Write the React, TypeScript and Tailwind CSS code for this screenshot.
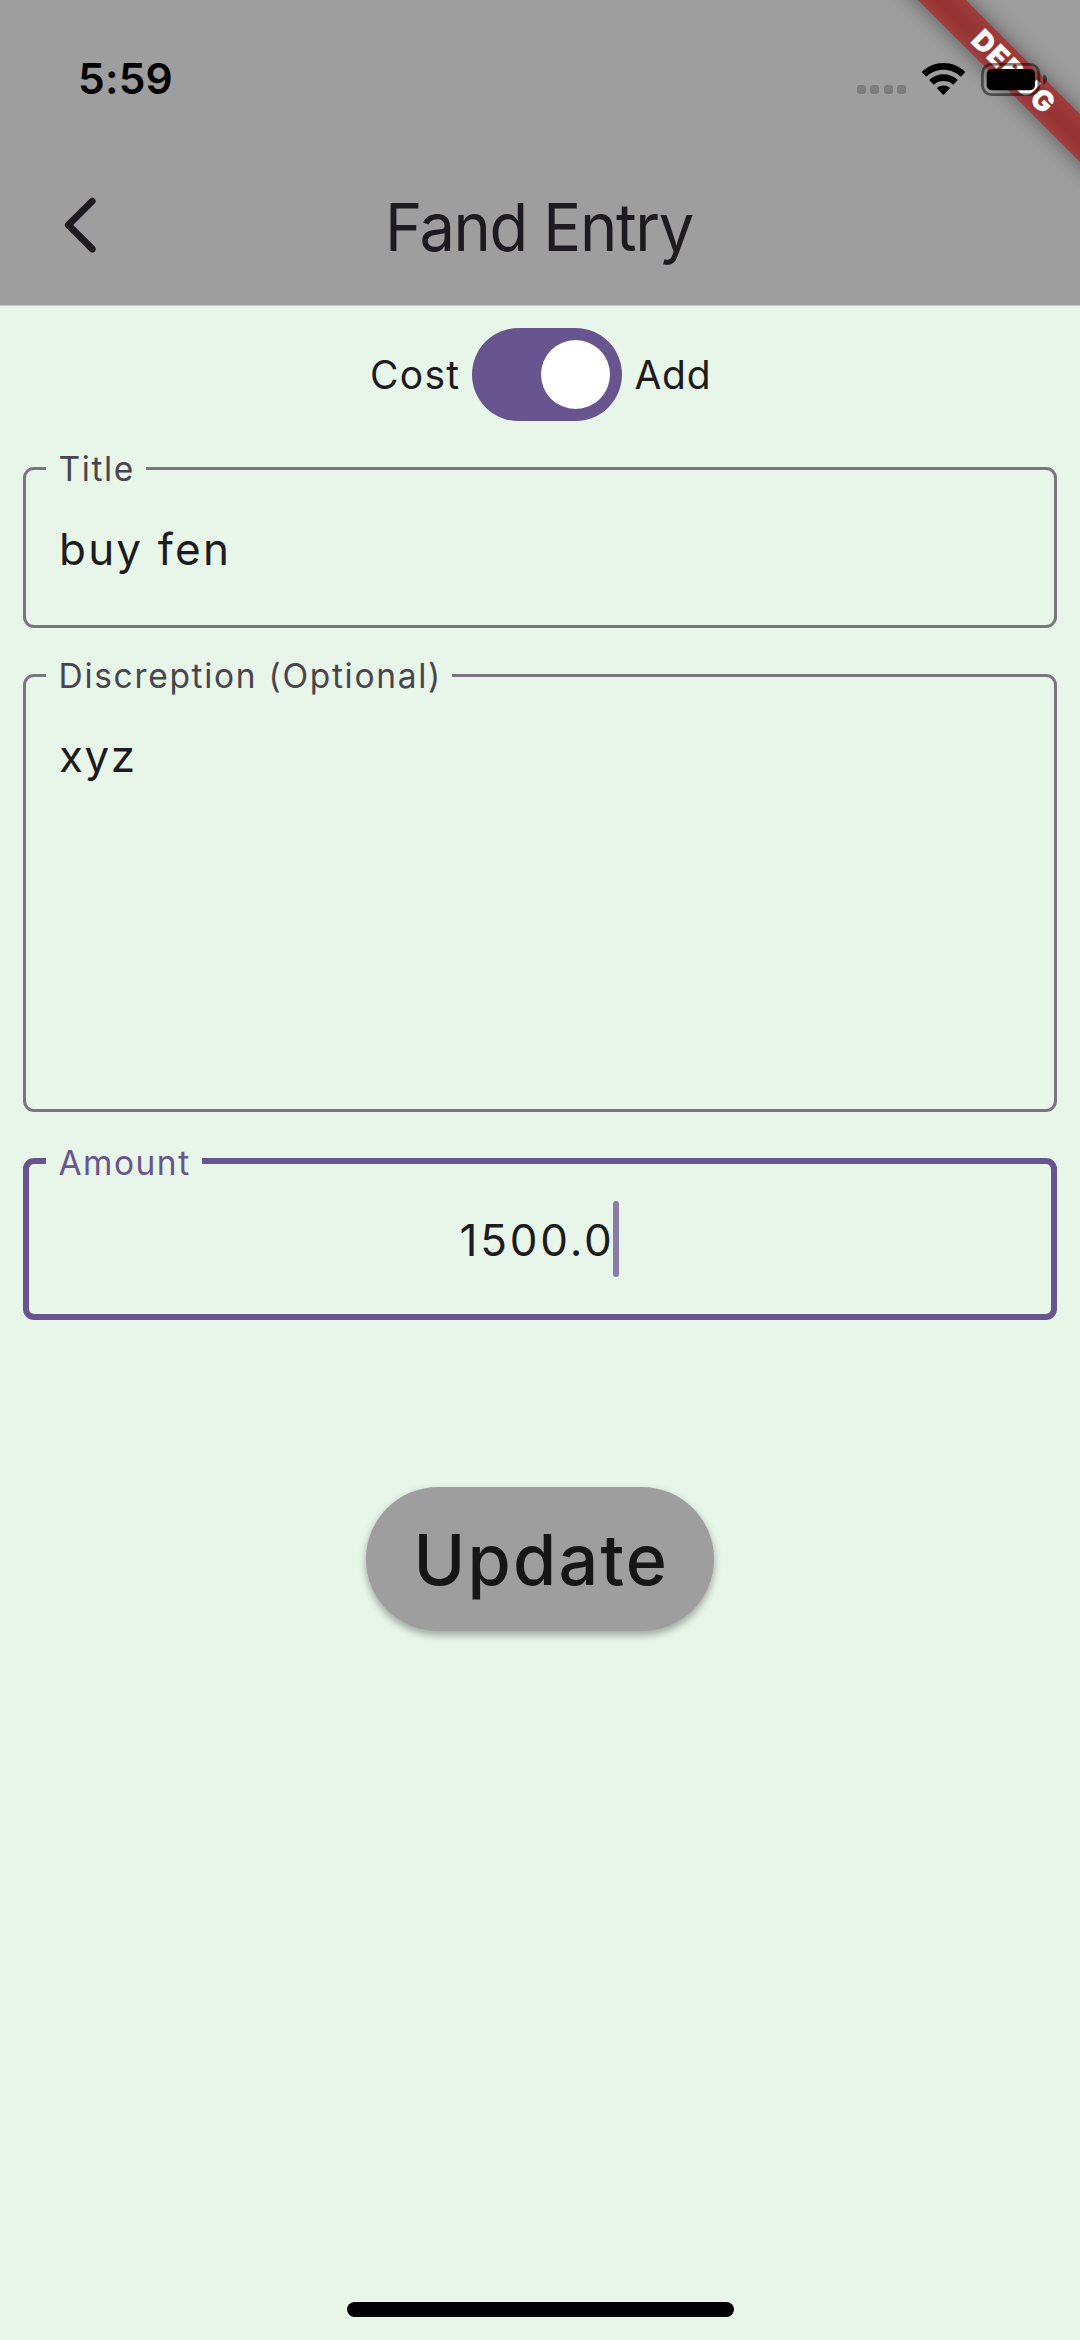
import type { ReactNode } from "react";

function StatusBar() {
  return (
    <div className="relative z-20 flex h-[158px] items-center pl-[78px] text-black">
      <span className="text-[42.5px] leading-none font-semibold tracking-[0.2px]">5:59</span>
      <div className="ml-auto flex items-center pr-[33px]">
        <div className="mt-[21px] mr-[16px] flex gap-[4.5px]">
          <i className="h-[9px] w-[9px] rounded-[3px] bg-[#7c7c7c]" />
          <i className="h-[9px] w-[9px] rounded-[3px] bg-[#7c7c7c]" />
          <i className="h-[9px] w-[9px] rounded-[3px] bg-[#7c7c7c]" />
          <i className="h-[9px] w-[9px] rounded-[3px] bg-[#7c7c7c]" />
        </div>
        <svg className="mr-[16px] h-[32px] w-[43px]" viewBox="0 0 43 32" fill="currentColor">
          <path d="M21.5 0C29.8 0 37.300 3.200 42.800 8.500Q43.300 9.100 42.800 9.700L39.400 13.200Q38.800 13.700 38.200 13.200C33.800 9.100 27.900 6.700 21.500 6.700S9.200 9.100 4.800 13.200Q4.200 13.700 3.600 13.200L.2 9.700Q-.3 9.100 .2 8.500C5.700 3.200 13.200 0 21.500 0Z" />
          <path d="M21.500 11.300C26.800 11.300 31.600 13.300 35.300 16.600Q35.800 17.100 35.300 17.700L31.700 21.200Q31.200 21.700 30.600 21.200C28.200 19.200 25 18 21.500 18S14.800 19.200 12.400 21.200Q11.800 21.700 11.300 21.200L7.700 17.700Q7.200 17.100 7.700 16.600C11.400 13.300 16.200 11.300 21.500 11.300Z" />
          <path d="M21.500 22.600C23.900 22.600 26 23.400 27.700 24.700Q28.200 25.200 27.700 25.800L22.100 31.400Q21.500 31.900 20.900 31.400L15.300 25.800Q14.800 25.200 15.300 24.700C17 23.400 19.100 22.600 21.500 22.600Z" />
        </svg>
        <svg className="h-[33px] w-[66px]" viewBox="0 0 66 33">
          <rect x="1.400" y="1.400" width="56.500" height="30.200" rx="9" fill="none" stroke="#000" strokeOpacity=".5" strokeWidth="2.800" />
          <rect x="5.700" y="6" width="48.300" height="21.300" rx="5" fill="#000" />
          <path d="M62.300 11.200C64.800 12.200 66 14.300 66 16.500S64.800 20.800 62.300 21.800Z" fill="#000" fillOpacity=".55" />
        </svg>
      </div>
    </div>
  );
}

function DebugBanner() {
  return (
    <div className="absolute top-0 right-0 z-10 h-[240px] w-[300px] overflow-hidden">
      <div className="absolute top-[51.5px] left-[30.500px] h-[34px] w-[400px] rotate-45">
        <div className="absolute inset-0 bg-black/45 blur-[11px]" />
        <div className="absolute inset-0 flex items-center justify-center bg-[#b71c1c]/63 pl-[8px] text-[28.5px] leading-none font-black tracking-[1.2px] text-white">
          DEBUG
        </div>
      </div>
    </div>
  );
}

function Field({ label, legend, box, children }: { label: string; legend: string; box: string; children: ReactNode }) {
  return (
    <fieldset className={`min-w-0 rounded-[11px] ${box}`}>
      <legend className={`h-[41px] pl-[12.5px] text-[33.5px] whitespace-nowrap ${legend}`}>{label}</legend>
      {children}
    </fieldset>
  );
}

export default function App() {
  return (
    <div className="relative flex h-[2340px] w-[1080px] flex-col overflow-hidden bg-[#e8f5e9] font-[Inter,sans-serif] text-[#1d1b20]">
      <header className="h-[306px] border-b border-[#c3cac4] bg-[#9e9e9e]">
        <StatusBar />
        <div className="flex h-[137px] items-center">
          <button className="flex w-[385px] pl-[64px]" aria-label="Back">
            <svg className="mt-[-4px] h-[56px] w-[34px]" viewBox="0 0 34 56" fill="none" stroke="currentColor" strokeWidth="6.800" strokeLinecap="round" strokeLinejoin="round">
              <path d="M28.300 4.200L4.300 28L28.300 52" />
            </svg>
          </button>
          <h1 className="origin-left scale-x-[0.95] pt-px text-[66.5px] leading-none tracking-[-1.4px] whitespace-nowrap">Fand Entry</h1>
        </div>
      </header>
      <DebugBanner />
      <main className="flex flex-1 flex-col px-[23px] pt-[22px]">
        <div className="flex h-[93px] items-center pl-[347px] text-[39px] leading-none">
          <span className="w-[101.5px] tracking-[1.3px]">Cost</span>
          <button role="switch" aria-checked="true" className="flex h-[92.500px] w-[150px] items-center justify-end rounded-full bg-[#68548e] pr-[11.5px]">
            <span className="h-[69px] w-[69px] rounded-full bg-white" />
          </button>
          <span className="ml-[13px] tracking-[0.7px]">Add</span>
        </div>
        <div className="mt-[27px] flex flex-col">
          <Field label="Title" box="h-[180px] border-[3px] border-[#7b757f]" legend="ml-[20px] w-[100px] leading-[43px] tracking-[1.6px] text-[#49454e]">
            <p className="pt-[38px] pl-[33px] text-[44px] leading-[44px] tracking-[2.2px]">buy fen</p>
          </Field>
          <Field label="Discreption (Optional)" box="mt-[27px] h-[457px] border-[3px] border-[#7b757f]" legend="ml-[20px] w-[406px] leading-[43px] tracking-[1.7px] text-[#49454e]">
            <p className="pt-[38px] pl-[33px] text-[44px] leading-[44px] tracking-[1.5px]">xyz</p>
          </Field>
          <Field label="Amount" box="mt-[28px] h-[180px] border-[6px] border-[#68548e]" legend="ml-[17px] w-[156px] leading-[46px] tracking-[1.5px] text-[#68548e]">
            <div className="flex items-center pt-[20px] pl-[430.5px]">
              <span className="w-[153px] pt-[1.5px] text-[44px] leading-none tracking-[2.800px]">1500.0</span>
              <i className="h-[76px] w-[6px] rounded-full bg-[#8a7ba9]" />
            </div>
          </Field>
        </div>
        <button className="mt-[167px] flex h-[144px] w-[348px] items-center self-center rounded-full bg-[#9e9e9e] pt-[2px] pl-[47.5px] text-[70px] leading-none font-medium tracking-[2.200px] text-[#161616] shadow-[0_5px_6px_rgba(0,0,0,0.18),0_3px_10px_rgba(0,0,0,0.16)]">
          Update
        </button>
      </main>
      <div className="mb-[23px] h-[15px] w-[387px] self-center rounded-full bg-black" />
    </div>
  );
}
